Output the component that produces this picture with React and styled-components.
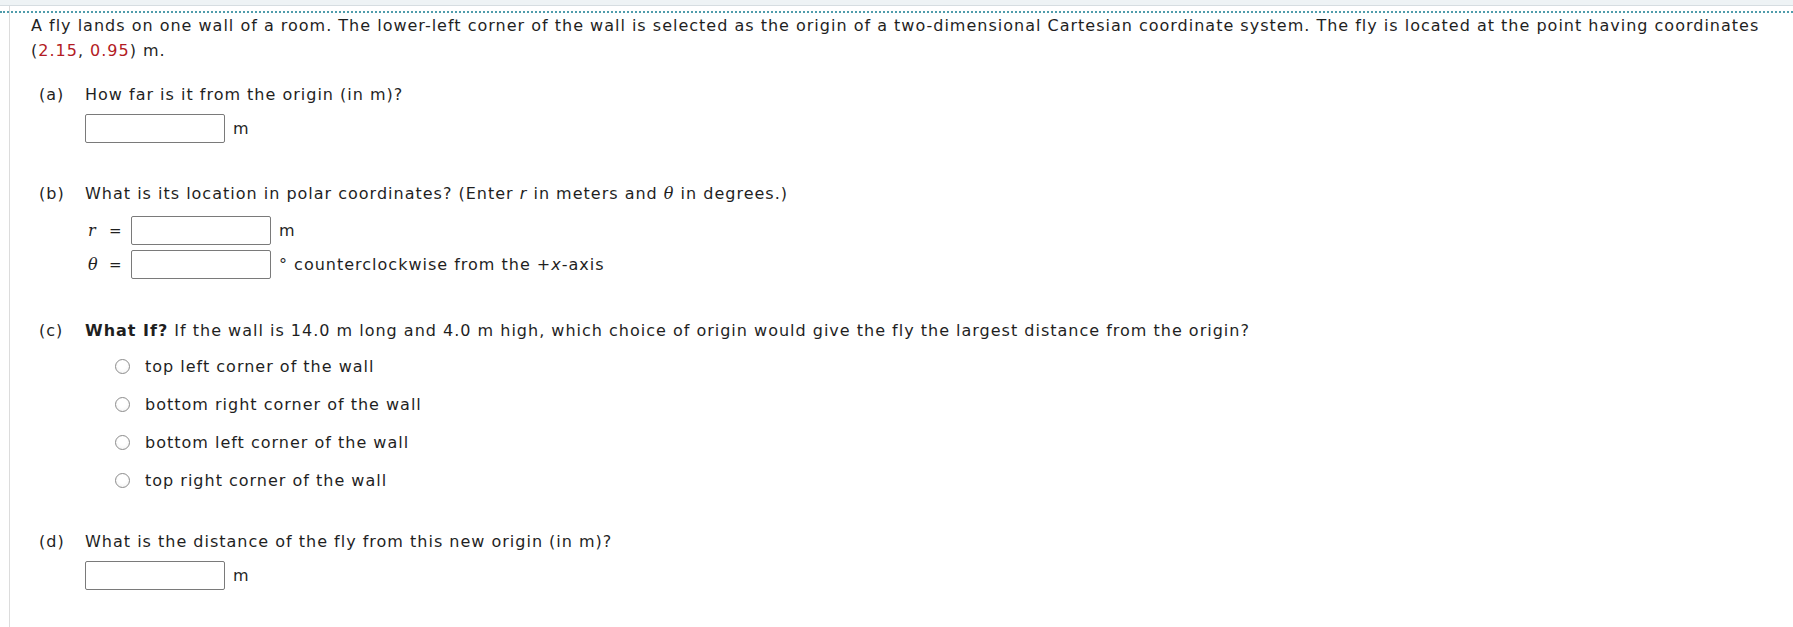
import React from "react";
import styled, { createGlobalStyle } from "styled-components";

const Global = createGlobalStyle`
  html, body { margin: 0; padding: 0; background: #fff; }
  body {
    font-family: "DejaVu Sans", Verdana, sans-serif;
    font-size: 16px;
    letter-spacing: 1px;
    color: #1f1f1f;
  }
`;

const Page = styled.div`
  min-height: 100vh;
  display: flex;
  flex-direction: column;
`;

const TopStrip = styled.div`
  height: 5px;
  background: #eef3f5;
  border-bottom: 1px solid #d6dde1;
  flex: none;
`;

const Frame = styled.div`
  flex: 1;
  margin-left: 9px;
  border-left: 1px solid #dcdcdc;
  padding-top: 5px;
`;

const Rule = styled.div`
  margin-left: -10px;
  border-top: 2px dotted #4f9cab;
`;

const Intro = styled.p`
  margin: 0;
  padding: 0 0 0 21px;
  line-height: 25px;
`;

const Num = styled.span`
  color: #b31b24;
`;

const Part = styled.section`
  display: grid;
  grid-template-columns: 46px auto;
  padding-left: 29px;
  margin-top: ${(p) => p.$top}px;
`;

const PartLabel = styled.div`
  line-height: 25px;
`;

const PartBody = styled.div`
  display: flex;
  flex-direction: column;
`;

const Question = styled.div`
  line-height: 25px;
`;

const AnswerRow = styled.div`
  display: flex;
  align-items: center;
  margin-top: ${(p) => p.$top}px;
`;

const Box = styled.input`
  box-sizing: border-box;
  width: 140px;
  height: 29px;
  border: 1px solid #7a7a7a;
  border-radius: 2px;
  background: #fff;
  margin: 0;
  padding: 0 4px;
  font: inherit;
`;

const Unit = styled.span`
  margin-left: 8px;
  line-height: 25px;
`;

const PolarGrid = styled.div`
  display: grid;
  grid-template-columns: 21px 22px auto;
  row-gap: 5px;
  margin-left: 3px;
  margin-top: 10px;
  align-items: center;
  letter-spacing: 0;
`;

const Var = styled.span`
  font-family: "DejaVu Serif", "Liberation Serif", serif;
  font-style: italic;
  font-size: 16px;
`;

const Eq = styled.span`
  font-size: 15px;
`;

const Italic = styled.i`
  font-style: italic;
`;

const MathI = styled.i`
  font-family: "DejaVu Serif", "Liberation Serif", serif;
  font-style: italic;
`;

const PolarUnit = styled(Unit)`
  letter-spacing: 1px;
`;

const Options = styled.div`
  display: flex;
  flex-direction: column;
  gap: 13.1px;
  margin-top: 11px;
`;

const Option = styled.label`
  display: flex;
  align-items: center;
  line-height: 25px;
  padding-left: 30px;
`;

const Radio = styled.span`
  box-sizing: border-box;
  width: 15px;
  height: 15px;
  border-radius: 50%;
  border: 1px solid #8c8c8c;
  background: radial-gradient(circle at 50% 40%, #ffffff 40%, #eeeeee 100%);
  margin-right: 15px;
  flex: none;
`;

const Bold = styled.b`
  font-weight: bold;
`;

function Answer({ unit, top }) {
  return (
    <AnswerRow $top={top}>
      <Box type="text" />
      <Unit>{unit}</Unit>
    </AnswerRow>
  );
}

const choices = [
  "top left corner of the wall",
  "bottom right corner of the wall",
  "bottom left corner of the wall",
  "top right corner of the wall",
];

export default function App() {
  return (
    <Page>
      <Global />
      <TopStrip />
      <Frame>
        <Rule />
        <Intro>
          A fly lands on one wall of a room. The lower-left corner of the wall is selected as the origin of a
          two-dimensional Cartesian coordinate system. The fly is located at the point having coordinates
          <br />(<Num>2.15</Num>, <Num>0.95</Num>) m.
        </Intro>

        <Part $top={19}>
          <PartLabel>(a)</PartLabel>
          <PartBody>
            <Question>How far is it from the origin (in m)?</Question>
            <Answer unit="m" top={7} />
          </PartBody>
        </Part>

        <Part $top={38}>
          <PartLabel>(b)</PartLabel>
          <PartBody>
            <Question>
              What is its location in polar coordinates? (Enter <Italic>r</Italic> in meters and{" "}
              <MathI>θ</MathI> in degrees.)
            </Question>
            <PolarGrid>
              <Var>r</Var>
              <Eq>=</Eq>
              <AnswerRow $top={0}>
                <Box type="text" />
                <PolarUnit>m</PolarUnit>
              </AnswerRow>
              <Var>θ</Var>
              <Eq>=</Eq>
              <AnswerRow $top={0}>
                <Box type="text" />
                <PolarUnit>
                  ° counterclockwise from the +<Italic>x</Italic>-axis
                </PolarUnit>
              </AnswerRow>
            </PolarGrid>
          </PartBody>
        </Part>

        <Part $top={39}>
          <PartLabel>(c)</PartLabel>
          <PartBody>
            <Question>
              <Bold>What If?</Bold> If the wall is 14.0 m long and 4.0 m high, which choice of origin would give
              the fly the largest distance from the origin?
            </Question>
            <Options>
              {choices.map((c) => (
                <Option key={c}>
                  <Radio />
                  {c}
                </Option>
              ))}
            </Options>
          </PartBody>
        </Part>

        <Part $top={36}>
          <PartLabel>(d)</PartLabel>
          <PartBody>
            <Question>What is the distance of the fly from this new origin (in m)?</Question>
            <Answer unit="m" top={7} />
          </PartBody>
        </Part>
      </Frame>
    </Page>
  );
}
